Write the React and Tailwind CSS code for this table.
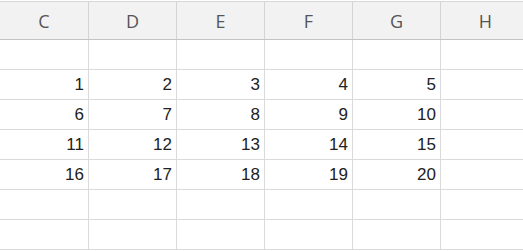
import React from "react";

const cols = ["C", "D", "E", "F", "G", "H"];
const widths = ["w-[89px]", "w-[88px]", "w-[88px]", "w-[88px]", "w-[88px]", "w-[90px]"];

const rows = [
  [null, null, null, null, null, null],
  [1, 2, 3, 4, 5, null],
  [6, 7, 8, 9, 10, null],
  [11, 12, 13, 14, 15, null],
  [16, 17, 18, 19, 20, null],
  [null, null, null, null, null, null],
  [null, null, null, null, null, null],
];

export default function App() {
  return (
    <div
      className="w-[523px] h-[251px] overflow-hidden bg-white relative"
      style={{ fontFamily: '"Liberation Sans", Arial, sans-serif' }}
    >
      <div className="h-px bg-white" />
      <div className="h-px bg-[#d6d6d6]" />
      <div className="flex h-[38px] bg-[#f2f2f2] border-b border-[#c4c4c4]">
        {cols.map((c, i) => (
          <div
            key={c}
            className={`${widths[i]} shrink-0 flex items-center justify-center border-r border-[#d4d4d4] text-[18px] text-[#555555] pt-[2px]`}
            style={{ fontFamily: '"Open Sans", "Liberation Sans", sans-serif', fontWeight: 400 }}
          >
            {c}
          </div>
        ))}
      </div>
      {rows.map((r, ri) => (
        <div key={ri} className="flex h-[30px] border-b border-[#dadada]">
          {r.map((v, ci) => (
            <div
              key={ci}
              className={`${widths[ci]} shrink-0 flex items-center justify-end pr-[4px] border-r border-[#dadada] text-[17px] text-[#222222]`}
            >
              {v}
            </div>
          ))}
        </div>
      ))}
    </div>
  );
}
